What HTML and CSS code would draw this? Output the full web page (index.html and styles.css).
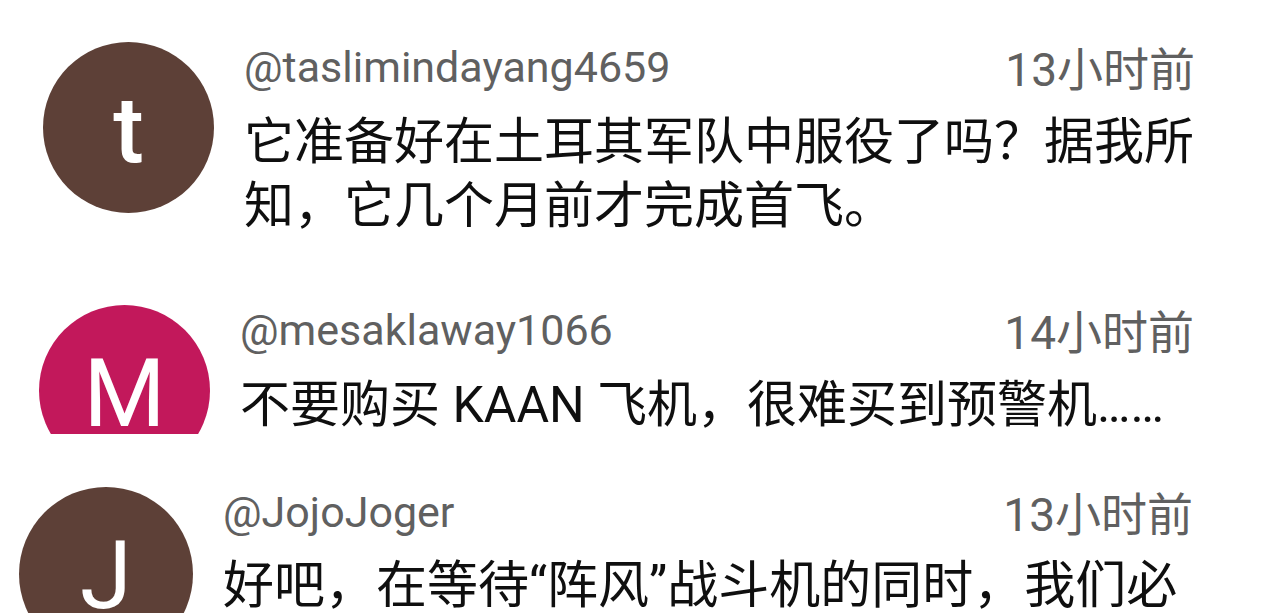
FILE: index.html
```html
<!DOCTYPE html>
<html lang="zh-CN">
<head>
<meta charset="utf-8">
<title>评论</title>
<link rel="stylesheet" href="styles.css">
</head>
<body>
<main class="comments">
  <article class="comment comment--first">
    <div class="avatar avatar--brown avatar--bold">t</div>
    <div class="body">
      <header class="meta"><span class="author">@taslimindayang4659</span><time class="time">13小时前</time></header>
      <p class="text">它准备好在土耳其军队中服役了吗？据我所知，它几个月前才完成首飞。</p>
    </div>
  </article>
  <article class="comment comment--second">
    <div class="avatar avatar--pink">M</div>
    <div class="body">
      <header class="meta"><span class="author">@mesaklaway1066</span><time class="time">14小时前</time></header>
      <p class="text">不要购买 KAAN 飞机，很难买到预警机……</p>
    </div>
  </article>
  <article class="comment comment--third">
    <div class="avatar avatar--brown avatar--large">J</div>
    <div class="body">
      <header class="meta"><span class="author">@JojoJoger</span><time class="time">13小时前</time></header>
      <p class="text text--large">好吧，在等待“阵风”战斗机的同时，我们必</p>
    </div>
  </article>
</main>
</body>
</html>
```

FILE: styles.css
```css
* { box-sizing: border-box; }
body {
  margin: 0;
  background: #fff;
  color: #0f0f0f;
  font-family: Roboto, "Noto Sans CJK SC", sans-serif;
}
.comments {
  display: flex;
  flex-direction: column;
  height: 100vh;
  overflow: hidden;
}
.comment {
  display: flex;
  flex: none;
  align-items: flex-start;
  gap: 30px;
  overflow: hidden;
}
.comment--first { padding: 42px 85px 0 43px; }
.comment--second { height: 129px; margin-top: 67px; padding: 0 86px 0 39px; }
.comment--third { flex: 1; min-height: 0; margin-top: 53px; padding: 0 87px 0 19px; }
.avatar {
  flex: none;
  width: 171px;
  height: 171px;
  border-radius: 50%;
  color: #fff;
  font-size: 94px;
  line-height: 178px;
  text-align: center;
}
.avatar--brown { background: #5d4037; }
.avatar--pink { background: #c2185b; }
.avatar--bold { font-size: 92px; font-weight: 500; }
.avatar--large { width: 174px; height: 174px; }
.body { flex: 1; min-width: 0; }
.meta {
  display: flex;
  align-items: flex-start;
  justify-content: space-between;
  color: #606060;
}
.author { font-size: 43px; line-height: 50px; }
.time { font-size: 46px; line-height: 56px; }
.text {
  margin: 12px 0 0;
  font-size: 50px;
  line-height: 64px;
}
.text--large { font-size: 51px; line-height: 62px; }
```
